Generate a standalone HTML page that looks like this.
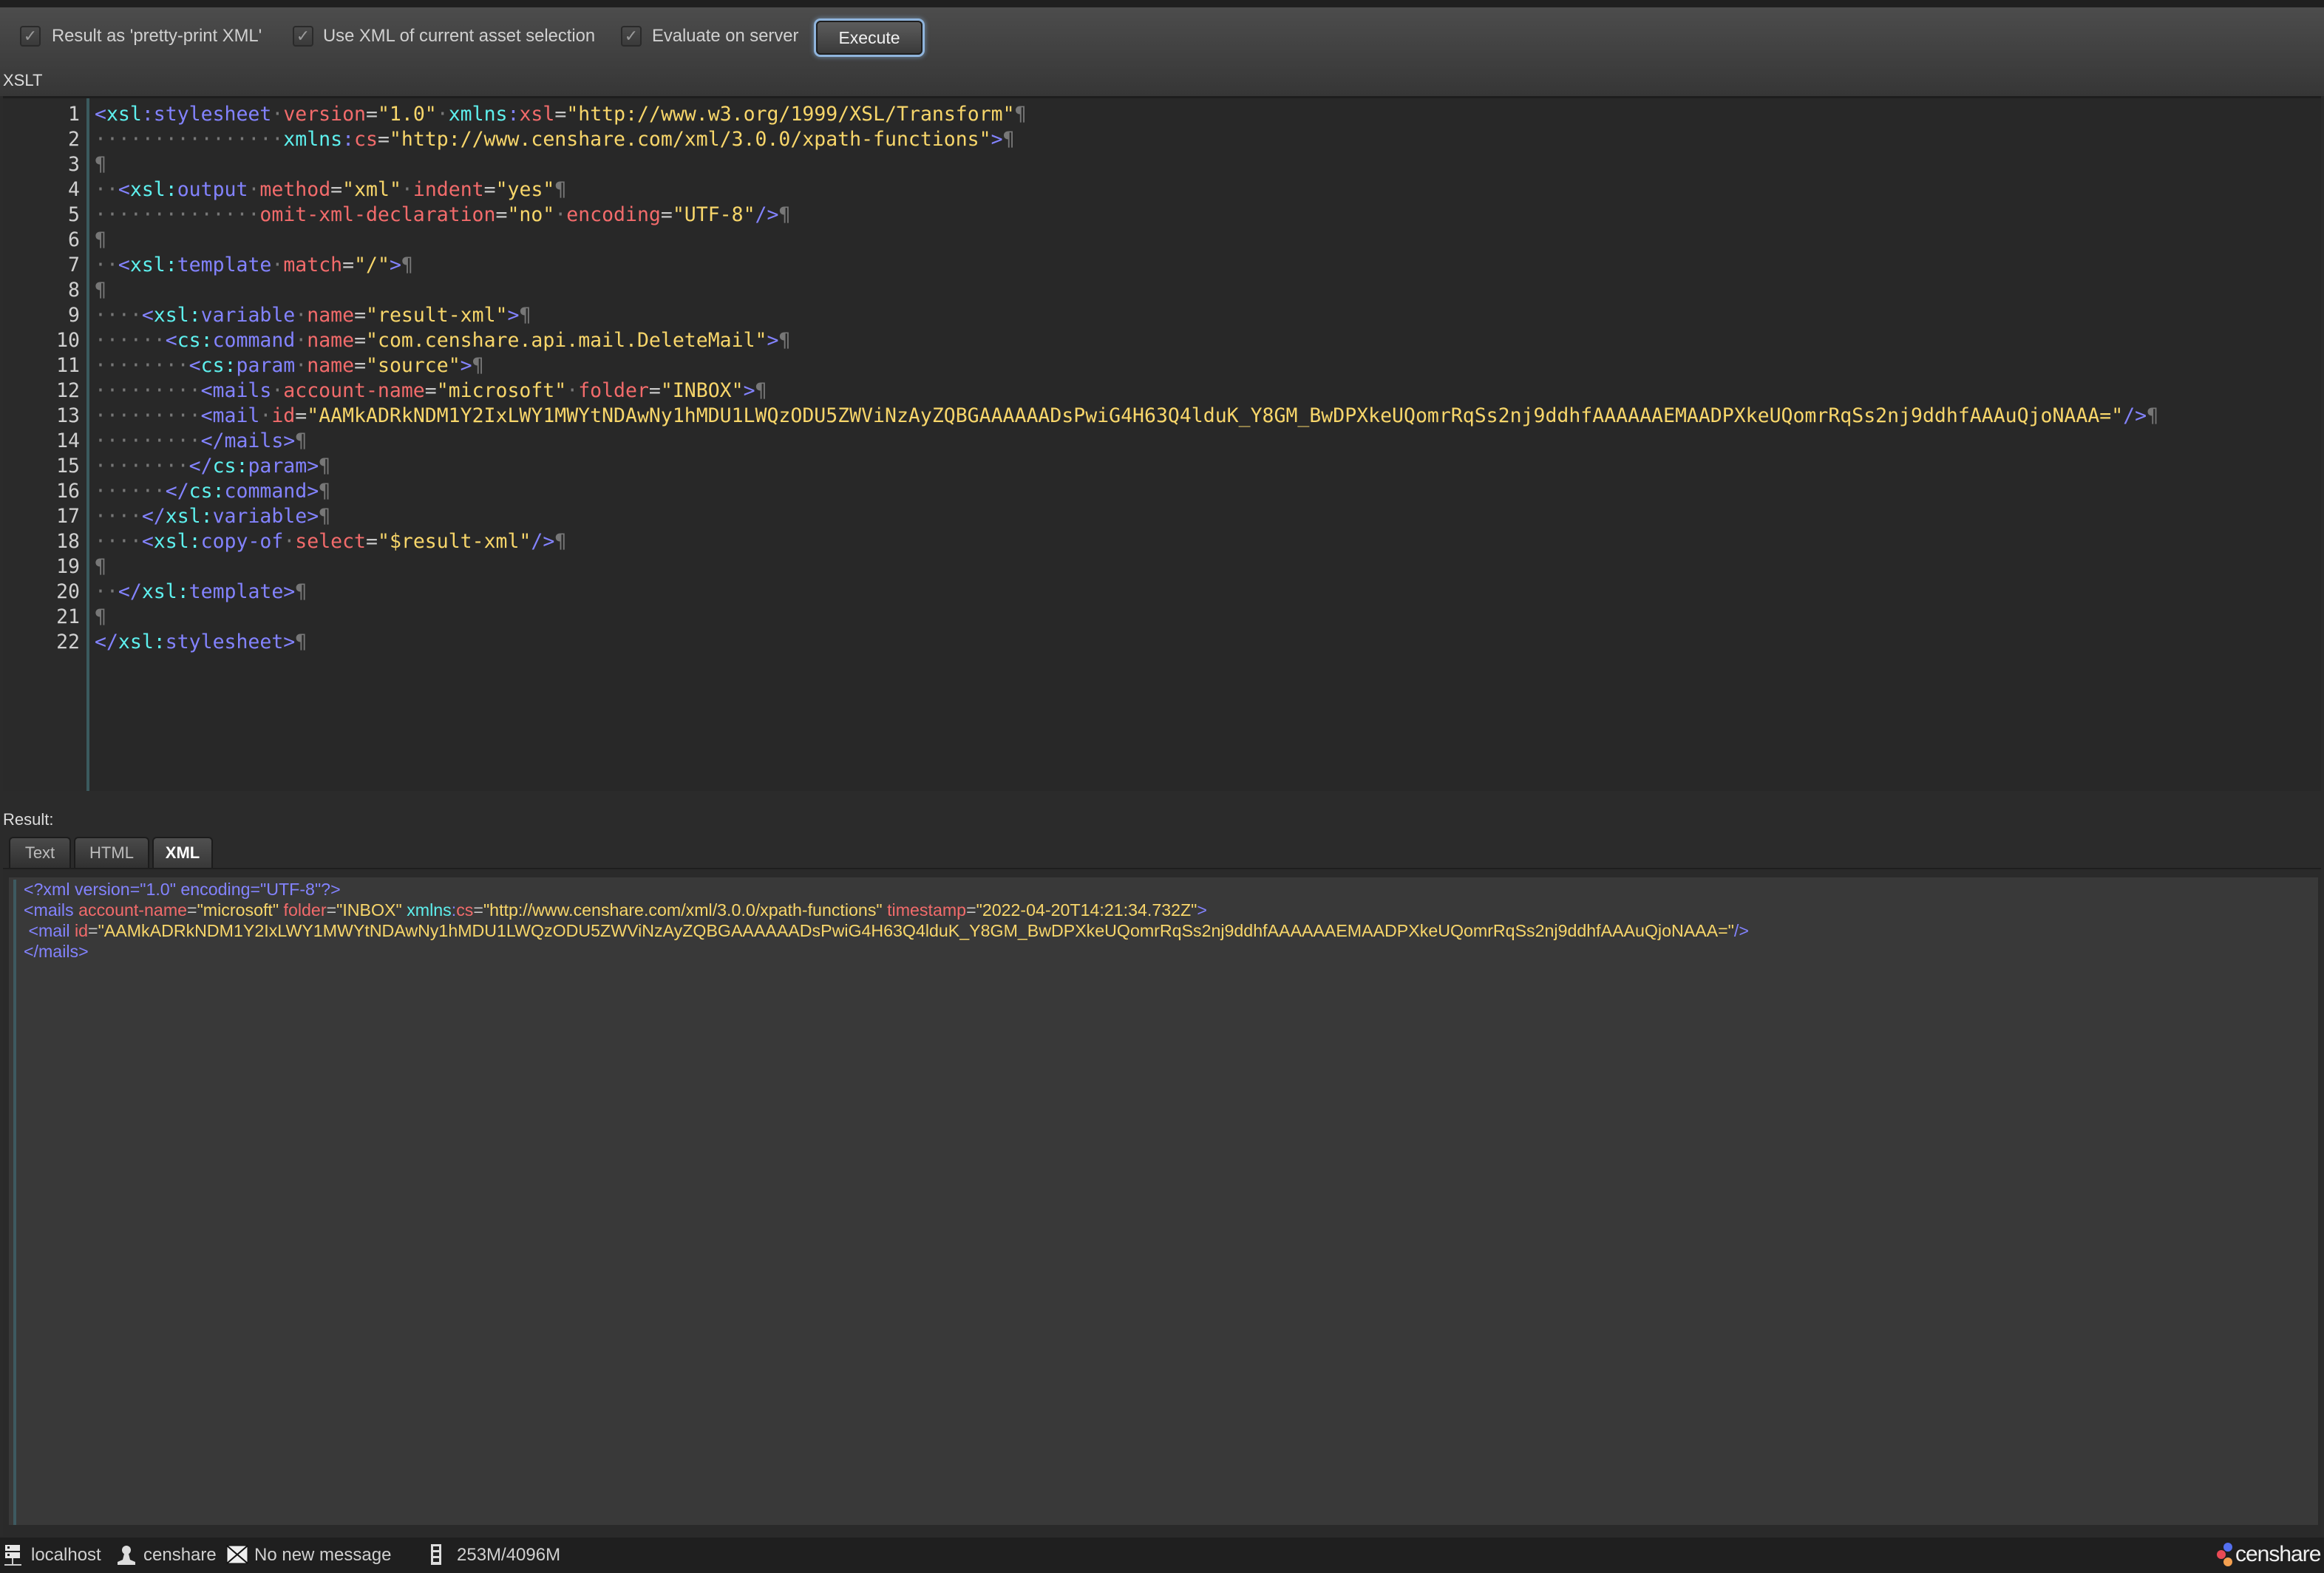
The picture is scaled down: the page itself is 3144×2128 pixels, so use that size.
<!DOCTYPE html>
<html><head><meta charset="utf-8">
<style>
*{margin:0;padding:0;box-sizing:border-box}
html,body{width:3144px;height:2128px;overflow:hidden;background:#2b2b2b;font-family:"Liberation Sans","DejaVu Sans",sans-serif;color:#d8d8d8}
.abs{position:absolute}
#top{left:0;top:0;width:3144px;height:10px;background:#1f1f1f}
#tb{left:0;top:10px;width:3144px;height:120px;background:linear-gradient(#4c4c4c,#363636)}
.cb{position:absolute;top:35px;width:28px;height:28px;border:2px solid #2a2a2a;border-radius:4px;background:linear-gradient(#4a4a4a,#3a3a3a);color:#9a9a9a;font-size:22px;line-height:24px;text-align:center}
.lbl{position:absolute;top:35px;font-size:23.8px;color:#d0d0d0;line-height:28px;white-space:nowrap}
#btn{left:1104px;top:28px;width:144px;height:46px;border:2px solid #1e1e1e;border-radius:6px;background:linear-gradient(#5c5c5c,#3a3a3a);box-shadow:0 0 0 3px #8fb4dc,0 0 6px 4px rgba(140,180,220,.5);color:#f0f0f0;font-size:23px;text-align:center;line-height:42px}
#xslt{left:4px;top:96px;font-size:22px;color:#ddd}
#ed{left:4px;top:130px;width:3136px;height:940px;background:#282828;border-top:3px solid #1e1e1e}
#gut{left:4px;top:133px;width:113px;height:937px;background:#2a2a2a}
#gl{left:117px;top:133px;width:4px;height:937px;background:#3b5a5e}
#nums{left:4px;top:138px;width:104px;text-align:right;font-family:"DejaVu Sans Mono",monospace;font-size:26.5px;line-height:34px;color:#d0d0d0}
#code{left:128px;top:138px;font-family:"DejaVu Sans Mono",monospace;font-size:26.5px;line-height:34px;white-space:pre;color:#ddd}
.t{color:#8383ff}.n{color:#5ef0ee}.a{color:#f26b6b}.s{color:#f8d66a}.d{color:#777}.p{color:#777}.e{color:#c8c8c8}
#mid{left:0;top:1072px;width:3144px;height:102px;background:#2b2b2b}
#res{left:4px;top:1096px;font-size:22px;color:#ddd}
.tab{position:absolute;top:1132px;height:42px;border:2px solid #1c1c1c;border-bottom:none;border-radius:6px 6px 0 0;background:linear-gradient(#4a4a4a,#303030);font-size:22px;text-align:center;line-height:40px;color:#bbb}
#rp{left:4px;top:1174px;width:3136px;height:904px;background:#2a2a2a;border-top:2px solid #1e1e1e}
#ri{left:12px;top:1184px;width:3124px;height:882px;background:#393939;border-top:3px solid #2a2a2a;border-bottom:3px solid #2a2a2a}
#rl{left:18px;top:1190px;width:4px;height:873px;background:#3e5a60}
#rcode{left:32px;top:1189px;font-size:23.2px;line-height:28px;white-space:pre;font-family:"Liberation Sans",sans-serif}
#sb{left:0;top:2078px;width:3144px;height:50px;background:#1f1f1f;border-top:2px solid #2a2a2a}
.st{position:absolute;top:2090px;font-size:24px;color:#d0d0d0;white-space:nowrap}
</style></head><body>
<div id="top" class="abs"></div>
<div id="tb" class="abs"></div>
<div class="cb" style="left:27px">✓</div><div class="lbl" style="left:70px">Result as 'pretty-print XML'</div>
<div class="cb" style="left:396px">✓</div><div class="lbl" style="left:437px">Use XML of current asset selection</div>
<div class="cb" style="left:840px">✓</div><div class="lbl" style="left:882px">Evaluate on server</div>
<div id="btn" class="abs">Execute</div>
<div id="xslt" class="abs">XSLT</div>
<div id="ed" class="abs"></div>
<div id="gut" class="abs"></div>
<div id="gl" class="abs"></div>
<div id="nums" class="abs">1<br>2<br>3<br>4<br>5<br>6<br>7<br>8<br>9<br>10<br>11<br>12<br>13<br>14<br>15<br>16<br>17<br>18<br>19<br>20<br>21<br>22</div>
<div id="code" class="abs"><span class="t">&lt;</span><span class="n">xsl</span><span class="t">:stylesheet</span><span class="d">·</span><span class="a">version</span><span class="e">=</span><span class="s">"1.0"</span><span class="d">·</span><span class="n">xmlns</span><span class="t">:</span><span class="a">xsl</span><span class="e">=</span><span class="s">"http://www.w3.org/1999/XSL/Transform"</span><span class="p">¶</span>
<span class="d">················</span><span class="n">xmlns</span><span class="t">:</span><span class="a">cs</span><span class="e">=</span><span class="s">"http://www.censhare.com/xml/3.0.0/xpath-functions"</span><span class="t">&gt;</span><span class="p">¶</span>
<span class="p">¶</span>
<span class="d">··</span><span class="t">&lt;</span><span class="n">xsl:</span><span class="t">output</span><span class="d">·</span><span class="a">method</span><span class="e">=</span><span class="s">"xml"</span><span class="d">·</span><span class="a">indent</span><span class="e">=</span><span class="s">"yes"</span><span class="p">¶</span>
<span class="d">··············</span><span class="a">omit-xml-declaration</span><span class="e">=</span><span class="s">"no"</span><span class="d">·</span><span class="a">encoding</span><span class="e">=</span><span class="s">"UTF-8"</span><span class="t">/&gt;</span><span class="p">¶</span>
<span class="p">¶</span>
<span class="d">··</span><span class="t">&lt;</span><span class="n">xsl:</span><span class="t">template</span><span class="d">·</span><span class="a">match</span><span class="e">=</span><span class="s">"/"</span><span class="t">&gt;</span><span class="p">¶</span>
<span class="p">¶</span>
<span class="d">····</span><span class="t">&lt;</span><span class="n">xsl:</span><span class="t">variable</span><span class="d">·</span><span class="a">name</span><span class="e">=</span><span class="s">"result-xml"</span><span class="t">&gt;</span><span class="p">¶</span>
<span class="d">······</span><span class="t">&lt;</span><span class="n">cs:</span><span class="t">command</span><span class="d">·</span><span class="a">name</span><span class="e">=</span><span class="s">"com.censhare.api.mail.DeleteMail"</span><span class="t">&gt;</span><span class="p">¶</span>
<span class="d">········</span><span class="t">&lt;</span><span class="n">cs:</span><span class="t">param</span><span class="d">·</span><span class="a">name</span><span class="e">=</span><span class="s">"source"</span><span class="t">&gt;</span><span class="p">¶</span>
<span class="d">·········</span><span class="t">&lt;mails</span><span class="d">·</span><span class="a">account-name</span><span class="e">=</span><span class="s">"microsoft"</span><span class="d">·</span><span class="a">folder</span><span class="e">=</span><span class="s">"INBOX"</span><span class="t">&gt;</span><span class="p">¶</span>
<span class="d">·········</span><span class="t">&lt;mail</span><span class="d">·</span><span class="a">id</span><span class="e">=</span><span class="s">"AAMkADRkNDM1Y2IxLWY1MWYtNDAwNy1hMDU1LWQzODU5ZWViNzAyZQBGAAAAAADsPwiG4H63Q4lduK_Y8GM_BwDPXkeUQomrRqSs2nj9ddhfAAAAAAEMAADPXkeUQomrRqSs2nj9ddhfAAAuQjoNAAA="</span><span class="t">/&gt;</span><span class="p">¶</span>
<span class="d">·········</span><span class="t">&lt;/mails&gt;</span><span class="p">¶</span>
<span class="d">········</span><span class="t">&lt;/</span><span class="n">cs:</span><span class="t">param&gt;</span><span class="p">¶</span>
<span class="d">······</span><span class="t">&lt;/</span><span class="n">cs:</span><span class="t">command&gt;</span><span class="p">¶</span>
<span class="d">····</span><span class="t">&lt;/</span><span class="n">xsl:</span><span class="t">variable&gt;</span><span class="p">¶</span>
<span class="d">····</span><span class="t">&lt;</span><span class="n">xsl:</span><span class="t">copy-of</span><span class="d">·</span><span class="a">select</span><span class="e">=</span><span class="s">"$result-xml"</span><span class="t">/&gt;</span><span class="p">¶</span>
<span class="p">¶</span>
<span class="d">··</span><span class="t">&lt;/</span><span class="n">xsl:</span><span class="t">template&gt;</span><span class="p">¶</span>
<span class="p">¶</span>
<span class="t">&lt;/</span><span class="n">xsl:</span><span class="t">stylesheet&gt;</span><span class="p">¶</span></div>
<div id="mid" class="abs"></div>
<div id="res" class="abs">Result:</div>
<div class="tab" style="left:12px;width:84px">Text</div>
<div class="tab" style="left:100px;width:102px">HTML</div>
<div class="tab" style="left:206px;width:82px;color:#fff;font-weight:bold;background:linear-gradient(#505050,#383838)">XML</div>
<div id="rp" class="abs"></div>
<div id="ri" class="abs"></div>
<div id="rl" class="abs"></div>
<div id="rcode" class="abs"><span class="t">&lt;?xml version="1.0" encoding="UTF-8"?&gt;</span>
<span class="t">&lt;mails </span><span class="a">account-name</span><span class="e">=</span><span class="s">"microsoft"</span> <span class="a">folder</span><span class="e">=</span><span class="s">"INBOX"</span> <span class="n">xmlns</span><span class="t">:</span><span class="a">cs</span><span class="e">=</span><span class="s">"http://www.censhare.com/xml/3.0.0/xpath-functions"</span> <span class="a">timestamp</span><span class="e">=</span><span class="s">"2022-04-20T14:21:34.732Z"</span><span class="t">&gt;</span>
 <span class="t">&lt;mail </span><span class="a">id</span><span class="e">=</span><span class="s">"AAMkADRkNDM1Y2IxLWY1MWYtNDAwNy1hMDU1LWQzODU5ZWViNzAyZQBGAAAAAADsPwiG4H63Q4lduK_Y8GM_BwDPXkeUQomrRqSs2nj9ddhfAAAAAAEMAADPXkeUQomrRqSs2nj9ddhfAAAuQjoNAAA="</span><span class="t">/&gt;</span>
<span class="t">&lt;/mails&gt;</span></div>
<div id="sb" class="abs"></div>
<svg class="abs" style="left:6px;top:2090px" width="24" height="32" viewBox="0 0 24 32"><rect x="1" y="0" width="20" height="8" fill="#e8e8e8"/><rect x="1" y="10" width="20" height="8" fill="#e8e8e8"/><rect x="4" y="2" width="3" height="3" fill="#222"/><rect x="4" y="12" width="3" height="3" fill="#222"/><rect x="10" y="18" width="2" height="10" fill="#ccc"/><rect x="0" y="26" width="23" height="2" fill="#ccc"/></svg>
<div class="st" style="left:42px">localhost</div>
<svg class="abs" style="left:156px;top:2090px" width="30" height="28" viewBox="0 0 30 28"><circle cx="15" cy="7" r="6" fill="#ddd"/><path d="M12 12h6l2 8 7 3v4H3v-4l7-3z" fill="#ddd"/></svg>
<div class="st" style="left:194px">censhare</div>
<svg class="abs" style="left:306px;top:2090px" width="30" height="26" viewBox="0 0 30 26"><rect x="1" y="1" width="28" height="24" fill="#eee" stroke="#111"/><path d="M1 1l14 12 14-12M1 25l14-12 14 12" stroke="#111" stroke-width="2" fill="none"/></svg>
<div class="st" style="left:344px">No new message</div>
<svg class="abs" style="left:582px;top:2088px" width="16" height="30" viewBox="0 0 16 30"><rect x="1" y="1" width="14" height="28" fill="#ddd"/><rect x="4" y="4" width="8" height="5" fill="#222"/><rect x="4" y="12" width="8" height="5" fill="#222"/><rect x="4" y="20" width="8" height="5" fill="#222"/></svg>
<div class="st" style="left:618px">253M/4096M</div>
<svg class="abs" style="left:2998px;top:2086px" width="24" height="34" viewBox="0 0 24 34"><circle cx="16" cy="7" r="6" fill="#5470f0"/><circle cx="7" cy="17" r="6" fill="#e84a55"/><circle cx="16" cy="27" r="6" fill="#f4a050"/></svg>
<div class="st" style="left:3024px;top:2086px;font-size:30px;color:#f0f0f0;letter-spacing:-1px">censhare</div>
</body></html>
